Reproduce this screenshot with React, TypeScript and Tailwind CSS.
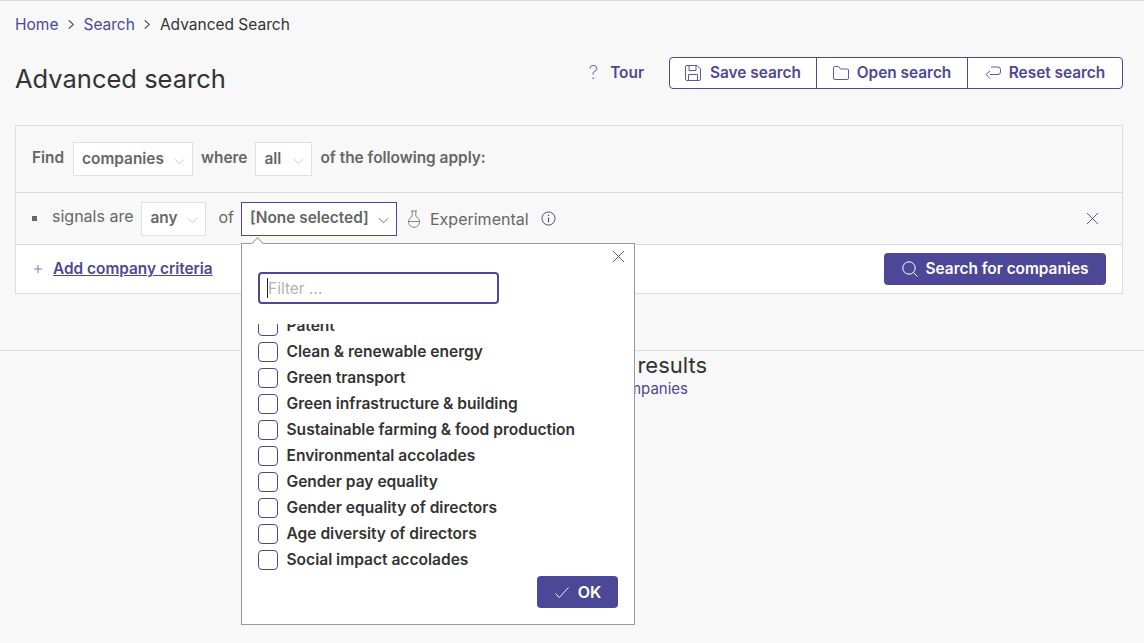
import React from "react";

const FONT = "font-['Inter','Liberation_Sans',sans-serif]";

function Chevron({ className = "" }: { className?: string }) {
  return (
    <svg viewBox="0 0 12 12" className={className} fill="none" stroke="currentColor" strokeWidth="1">
      <path d="M1 3.500 6 8.500l5-5" />
    </svg>
  );
}

function Cross({ className = "" }: { className?: string }) {
  return (
    <svg viewBox="0 0 14 14" className={className} fill="none" stroke="currentColor" strokeWidth="1">
      <path d="M1 1l12 12M13 1 1 13" />
    </svg>
  );
}

function Sel({ label, w, lift = "" }: { label: string; w: string; lift?: string }) {
  return (
    <div className={`flex h-[34px] items-center justify-between border border-[#e0e0e0] bg-white pl-2 pr-[7px] text-[15.4px] font-semibold text-[#666] ${w}`}>
      <span className={lift}>{label}</span>
      <Chevron className="mt-1 h-[11px] w-[11px] text-[#c4c4c4]" />
    </div>
  );
}

const items = [
  "Clean & renewable energy",
  "Green transport",
  "Green infrastructure & building",
  "Sustainable farming & food production",
  "Environmental accolades",
  "Gender pay equality",
  "Gender equality of directors",
  "Age diversity of directors",
  "Social impact accolades",
];

function Check({ label }: { label: string }) {
  return (
    <label className="flex h-[26px] shrink-0 items-center gap-[8.5px] text-[15.55px] font-semibold text-[#333]">
      <span className="h-5 w-5 shrink-0 rounded-[4px] border border-[#4c4897] bg-white" />
      <span>{label}</span>
    </label>
  );
}

function Popover() {
  return (
    <div className="absolute left-[241px] top-[242px] z-10 h-[382px] w-[394px] border border-[#999] bg-white">
      <div className="absolute -top-[5px] left-[11px] h-[9px] w-[9px] rotate-45 border-l border-t border-[#999] bg-white" />
      <button className="absolute right-[9px] top-[6px] text-[#4c4897]">
        <Cross className="h-[13px] w-[13px]" />
      </button>
      <div className="px-4 pt-[28px]">
        <div className="flex h-[32px] w-[241px] items-center rounded-[4px] border-2 border-[#4c4897] pl-[7px] text-[15.5px] text-[#b3b3b3]">
          <span className="h-[20px] w-px bg-[#222]" />
          <span className="pt-px">Filter ...</span>
        </div>
        <div className="mt-[20px] flex h-[249px] flex-col justify-end overflow-hidden">
          <Check label="Patent" />
          {items.map((t) => (
            <Check key={t} label={t} />
          ))}
        </div>
      </div>
      <div className="absolute bottom-4 right-4 flex h-8 w-[81px] items-center justify-center gap-2 rounded-[4px] bg-[#4c4897] text-[16px] font-semibold text-white">
        <svg viewBox="0 0 16 14" className="h-[13px] w-[16px]" fill="none" stroke="currentColor" strokeWidth="1">
          <path d="M1 8l4 4.500L15 1.500" />
        </svg>
        OK
      </div>
    </div>
  );
}

export default function App() {
  return (
    <div className={`relative h-[643px] w-[1144px] overflow-hidden border-t border-[#ddd] bg-[#f8f8f8] ${FONT}`}>
      <nav className="flex h-[47px] items-center gap-[8.5px] px-[15px] text-[15.5px] text-[#333]">
        <a className="text-[#4c4897]">Home</a>
        <svg viewBox="0 0 8 12" className="h-[11px] w-[8px]" fill="none" stroke="#333" strokeWidth="1.100"><path d="M1.500 1.500 6.500 6l-5 4.500" /></svg>
        <a className="text-[#4c4897]">Search</a>
        <svg viewBox="0 0 8 12" className="h-[11px] w-[8px]" fill="none" stroke="#333" strokeWidth="1.100"><path d="M1.500 1.500 6.500 6l-5 4.500" /></svg>
        <span>Advanced Search</span>
      </nav>

      <header className="flex items-start justify-between pl-[15px] pr-[21px] pt-[9px]">
        <h1 className="text-[25.5px] font-normal leading-[44px] text-[#333]">Advanced search</h1>
        <div className="flex items-center text-[15.4px] font-semibold text-[#4c4897]">
          <span className="flex items-center gap-[12px]">
            <span className="text-[19px] font-extralight leading-[24px] text-[#5d59a3]">?</span>
            <span className="-mt-px">Tour</span>
          </span>
          <div className="ml-[25px] flex h-8 items-center rounded-[4px] border border-[#4c4897] bg-white">
            <span className="flex h-full w-[147px] items-center justify-center gap-[9px] border-r border-[#4c4897]">
              <svg viewBox="0 0 16 16" className="h-4 w-4" fill="none" stroke="currentColor" strokeWidth="0.900">
                <path d="M2 .500h10l3.500 3.500v10a1.500 1.500 0 0 1-1.500 1.500H2A1.500 1.500 0 0 1 .500 14V2A1.500 1.500 0 0 1 2 .500z" />
                <path d="M4 .500v5h7v-5M3.500 15.500V9.500h9v6" />
              </svg>
              Save search
            </span>
            <span className="flex h-full w-[151px] items-center justify-center gap-[8px] border-r border-[#4c4897]">
              <svg viewBox="0 0 16 14" className="h-[14px] w-4" fill="none" stroke="currentColor" strokeWidth="0.900">
                <path d="M.500 12V1.500a1 1 0 0 1 1-1h4l2 2.500h7a1 1 0 0 1 1 1V12a1.500 1.500 0 0 1-1.500 1.500H2A1.500 1.500 0 0 1 .500 12z" />
              </svg>
              Open search
            </span>
            <span className="flex h-full w-[154px] items-center justify-center gap-[8px]">
              <svg viewBox="0 0 16 14" className="h-[14px] w-4" fill="none" stroke="currentColor" strokeWidth="0.900">
                <path d="M5 8.500H13a2.500 2.500 0 0 0 2.500-2.500V3.500A2.500 2.500 0 0 0 13 1H6M5 5 1 8.500 5 12.500" />
              </svg>
              Reset search
            </span>
          </div>
        </div>
      </header>

      <section className="mx-[15px] mt-[24px] w-[1108px] border border-[#ddd]">
        <div className="flex h-[67px] items-center border-b border-[#ddd] pl-4 text-[15.4px] font-semibold text-[#666]">
          <span className="-mt-[2px]">Find</span>
          <div className="ml-[9px]"><Sel label="companies" w="w-[120px]" /></div>
          <span className="-mt-[2px] ml-2">where</span>
          <div className="ml-2"><Sel label="all" w="w-[57px]" /></div>
          <span className="-mt-[2px] ml-2">of the following apply:</span>
        </div>
        <div className="flex h-[52px] items-center border-b border-[#ddd] pl-4 pr-[23px] text-[16px] text-[#666]">
          <span className="h-[5px] w-[5px] bg-[#666]" />
          <span className="-mt-[5px] ml-[15px]">signals are</span>
          <div className="ml-2"><Sel label="any" w="w-[65px]" lift="-mt-[2px]" /></div>
          <span className="-mt-[3px] ml-[12px]">of</span>
          <div className="ml-[7px] flex h-[34px] w-[156px] items-center justify-between border border-[#4c4897] bg-white pl-2 pr-[7px] text-[15.4px] font-semibold">
            <span className="-mt-[2px]">[None selected]</span>
            <Chevron className="mt-1 h-[11px] w-[11px]" />
          </div>
          <svg viewBox="0 0 14 18" className="ml-[10px] h-[18px] w-[14px]" fill="none" stroke="#777" strokeWidth="0.900">
            <path d="M4 1h6M5.200 1v5L2 9.500a5.500 5.500 0 1 0 10 0L8.800 6V1M1.500 11.500h11" />
          </svg>
          <span className="ml-[9px] text-[16px]">Experimental</span>
          <svg viewBox="0 0 16 16" className="ml-3 h-[15px] w-[15px]" fill="none" stroke="#4c4897" strokeWidth="1">
            <circle cx="8" cy="8" r="7" />
            <path d="M8 7v5" strokeWidth="1.300" />
            <circle cx="8" cy="4.500" r="0.800" fill="#4c4897" stroke="none" />
          </svg>
          <Cross className="ml-auto h-[13px] w-[13px] text-[#4c4897]" />
        </div>
        <div className="flex h-[48px] items-center justify-between bg-white pl-[18px] pr-4">
          <a className="flex items-center gap-[11px] text-[15.4px] font-semibold text-[#4c4897]">
            <svg viewBox="0 0 8 8" className="h-2 w-2" fill="none" stroke="#7b78b4" strokeWidth="1"><path d="M4 0v8M0 4h8" /></svg>
            <span className="underline">Add company criteria</span>
          </a>
          <button className="flex h-8 w-[222px] items-center justify-center gap-2 rounded-[4px] bg-[#4c4897] text-[15.4px] font-semibold text-white">
            <svg viewBox="0 0 16 16" className="h-4 w-4" fill="none" stroke="currentColor" strokeWidth="1">
              <circle cx="7" cy="7" r="6.200" />
              <path d="M11.500 11.500 15.500 15.500" />
            </svg>
            Search for companies
          </button>
        </div>
      </section>

      <section className="mt-[56px] border-t border-[#ddd] pt-px text-right">
        <h2 className="pr-[437px] text-[22px] leading-[26px] text-[#333]">results</h2>
        <a className="block pr-[456px] text-[15px] leading-[21px] text-[#4c4897]">companies</a>
      </section>

      <Popover />
    </div>
  );
}
